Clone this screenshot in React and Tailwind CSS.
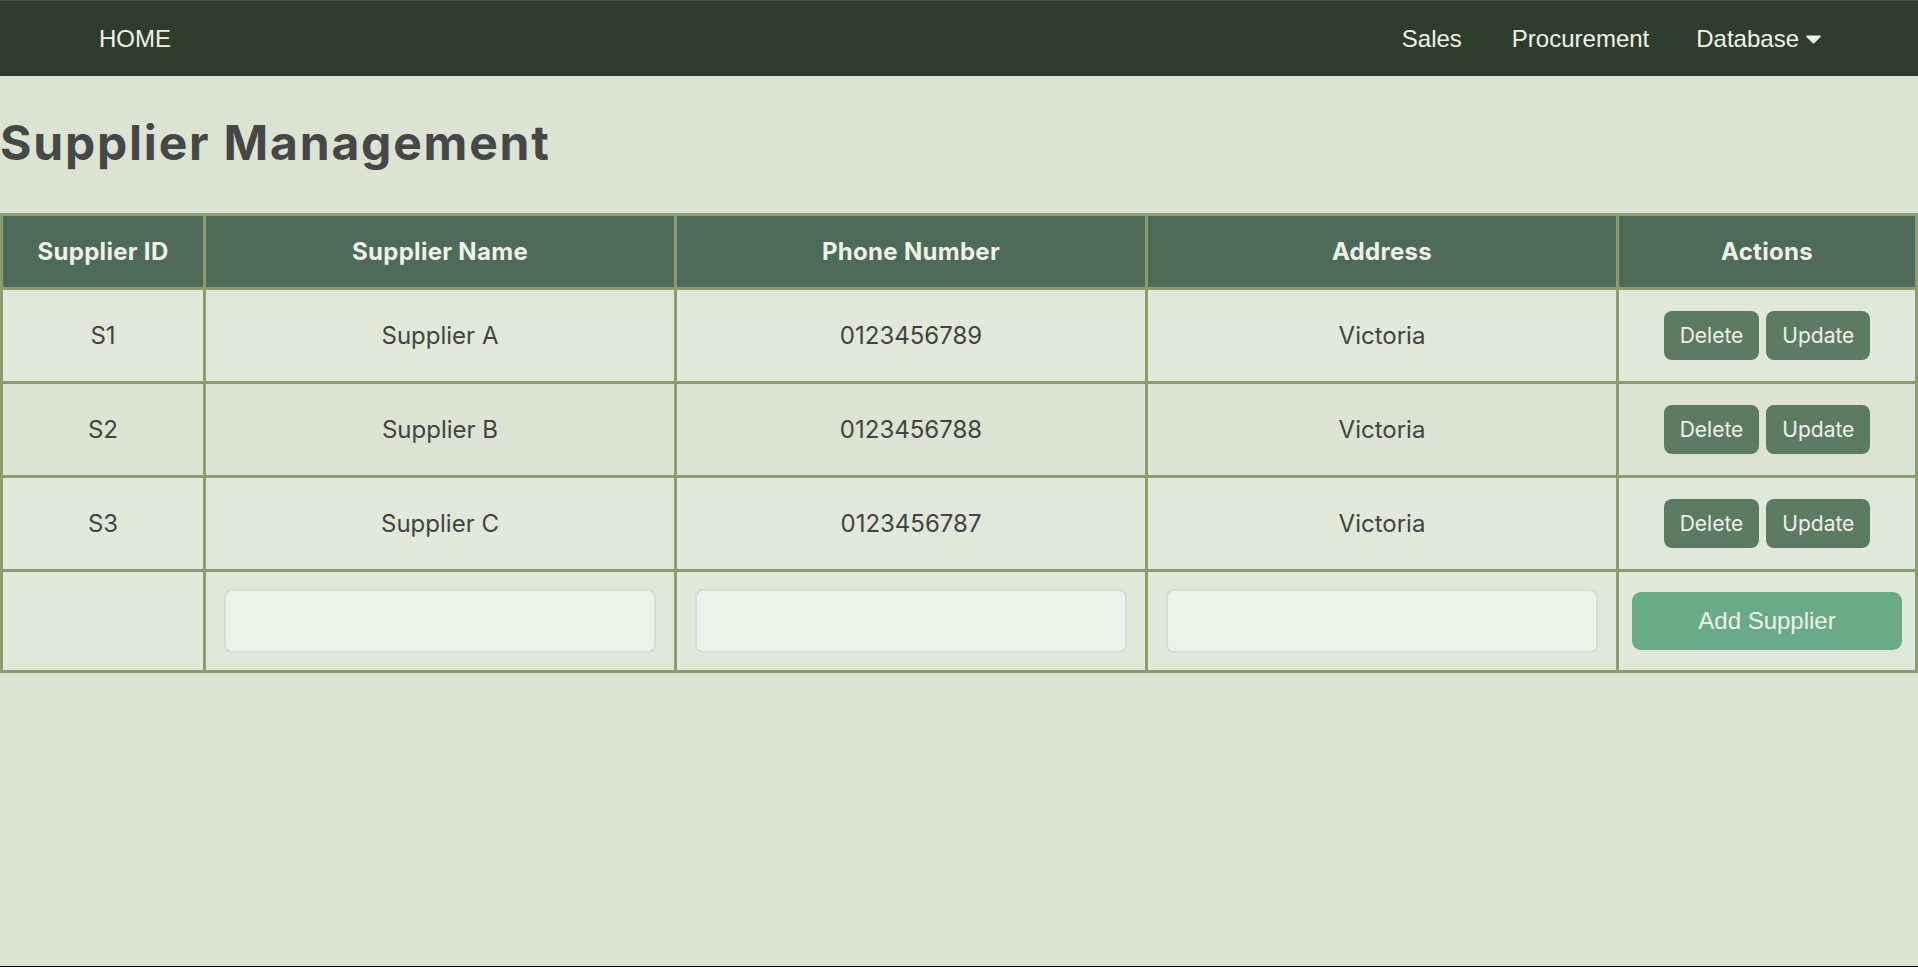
import React from "react";

const suppliers = [
  { id: "S1", name: "Supplier A", phone: "0123456789", address: "Victoria" },
  { id: "S2", name: "Supplier B", phone: "0123456788", address: "Victoria" },
  { id: "S3", name: "Supplier C", phone: "0123456787", address: "Victoria" },
];

function NavBar() {
  return (
    <nav className="flex items-center justify-between h-[75px] bg-[#2f3d2c] pl-[99px] pr-[97px] font-['Liberation_Sans',Arial,sans-serif] text-[24px] text-[#f0f2ea]">
      <a href="#" className="leading-none">HOME</a>
      <div className="flex items-center">
        <a href="#" className="leading-none">Sales</a>
        <a href="#" className="ml-[50px] leading-none">Procurement</a>
        <a href="#" className="ml-[47px] flex items-center gap-[7px] leading-none">
          Database
          <svg width="15" height="9" viewBox="0 0 15 9" className="mt-[1px]">
            <path d="M1.2 0.5h12.6c0.9 0 1.3 1 0.7 1.6L8.2 8.2c-0.4 0.4-1 0.4-1.4 0L0.5 2.1C-0.1 1.5 0.3 0.5 1.2 0.5z" fill="#f0f2ea" />
          </svg>
        </a>
      </div>
    </nav>
  );
}

function Cell({ children, className = "" }) {
  return (
    <td className={"border-[3px] border-[#8b9c71] text-center align-middle " + className}>
      {children}
    </td>
  );
}

function HeadCell({ children }) {
  return (
    <th className="border-[3px] border-[#8b9c71] bg-[#4e6a58] text-center align-middle font-bold text-[24px] tracking-[0.3px] text-[#eef1e8]">
      {children}
    </th>
  );
}

function ActionButton({ children }) {
  return (
    <button className="h-[49px] px-[16px] rounded-[8px] bg-[#5b7b63] text-[21px] text-[#eef1e8] leading-none">
      {children}
    </button>
  );
}

function NewField() {
  return (
    <input
      type="text"
      className="block w-full h-[64px] rounded-[8px] border-2 border-[#d9dbd7] bg-[#eef1e9] outline-none"
    />
  );
}

export default function App() {
  return (
    <div className="min-h-screen flex flex-col bg-[#dce3d2] border-t border-[#4d4d4d] font-['Inter',sans-serif]">
      <NavBar />
      <h1 className="mt-[38px] mb-[41px] text-[48px] leading-[58px] font-bold tracking-[1.8px] text-[#474747]">
        Supplier Management
      </h1>

      <table className="w-full table-fixed border-collapse border-[3px] border-[#8b9c71]">
        <colgroup>
          <col className="w-[203px]" />
          <col className="w-[471px]" />
          <col className="w-[471px]" />
          <col className="w-[471px]" />
          <col />
        </colgroup>
        <thead>
          <tr className="h-[74px]">
            <HeadCell>Supplier ID</HeadCell>
            <HeadCell>Supplier Name</HeadCell>
            <HeadCell>Phone Number</HeadCell>
            <HeadCell>Address</HeadCell>
            <HeadCell>Actions</HeadCell>
          </tr>
        </thead>
        <tbody className="text-[24px] text-[#434343]">
          {suppliers.map((s, i) => (
            <tr key={s.id} className={"h-[94px] " + (i % 2 === 1 ? "bg-[#dce3d2]" : "bg-[#e2e8d9]")}>
              <Cell>{s.id}</Cell>
              <Cell>{s.name}</Cell>
              <Cell>{s.phone}</Cell>
              <Cell>{s.address}</Cell>
              <Cell>
                <div className="flex justify-center gap-[7px]">
                  <ActionButton>Delete</ActionButton>
                  <ActionButton>Update</ActionButton>
                </div>
              </Cell>
            </tr>
          ))}
          <tr className="h-[101px] bg-[#e2e8d9]">
            <Cell />
            <Cell className="px-[18px]">
              <NewField />
            </Cell>
            <Cell className="px-[18px]">
              <NewField />
            </Cell>
            <Cell className="px-[18px]">
              <NewField />
            </Cell>
            <Cell className="px-[13px]">
              <button className="w-full h-[58px] rounded-[9px] bg-[#69aa87] text-[24px] text-[#eef1e8] font-['Liberation_Sans',Arial,sans-serif]">
                Add Supplier
              </button>
            </Cell>
          </tr>
        </tbody>
      </table>

      <div className="flex-1" />
      <div className="h-px bg-black" />
    </div>
  );
}
